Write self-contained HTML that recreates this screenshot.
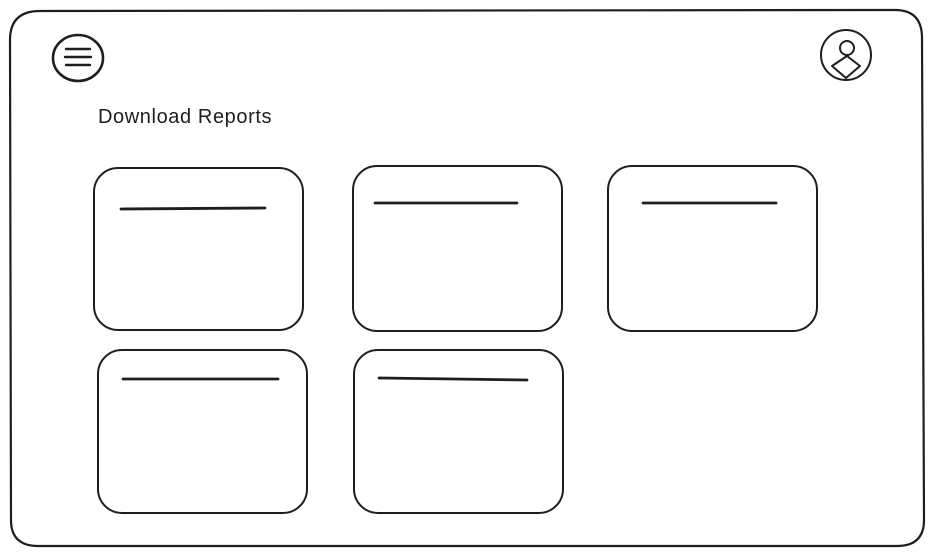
<!DOCTYPE html>
<html><head><style>
html,body{margin:0;padding:0;background:#fff;width:933px;height:555px;overflow:hidden}
.t{position:absolute;left:98px;top:106px;font-family:"Comic Sans MS","Liberation Sans",sans-serif;font-size:20px;color:#1e1e1e;letter-spacing:0.6px}
</style></head><body>
<svg width="933" height="555" style="position:absolute;left:0;top:0" fill="none" stroke="#1e1e1e" stroke-linecap="round" stroke-linejoin="round">
<path d="M40 11 L895 10 Q922 10 922 38 L924 520 Q924 546 897 546 L38 546 Q11 546 11 520 L10 40 Q10 11 40 11 Z" stroke-width="2.2"/>
<ellipse cx="78" cy="58" rx="25" ry="23" stroke-width="2.6"/>
<path d="M66 49 L90 49 M65 57 L91 57 M66 65 L90 65" stroke-width="2.4"/>
<circle cx="846" cy="55" r="25" stroke-width="2"/>
<circle cx="847" cy="48" r="7" stroke-width="2"/>
<path d="M847 56 L832 66 L846 78 L860 66 Z" stroke-width="2"/>
<rect x="94" y="168" width="209" height="162" rx="24" stroke-width="2"/>
<path d="M121 209 L265 208" stroke-width="2.8"/>
<rect x="353" y="166" width="209" height="165" rx="24" stroke-width="2"/>
<path d="M375 203 L517 203" stroke-width="2.8"/>
<rect x="608" y="166" width="209" height="165" rx="24" stroke-width="2"/>
<path d="M643 203 L776 203" stroke-width="2.8"/>
<rect x="98" y="350" width="209" height="163" rx="24" stroke-width="2"/>
<path d="M123 379 L278 379" stroke-width="2.8"/>
<rect x="354" y="350" width="209" height="163" rx="24" stroke-width="2"/>
<path d="M379 378 L527 380" stroke-width="2.8"/>
</svg>
<div class="t">Download Reports</div>
</body></html>
